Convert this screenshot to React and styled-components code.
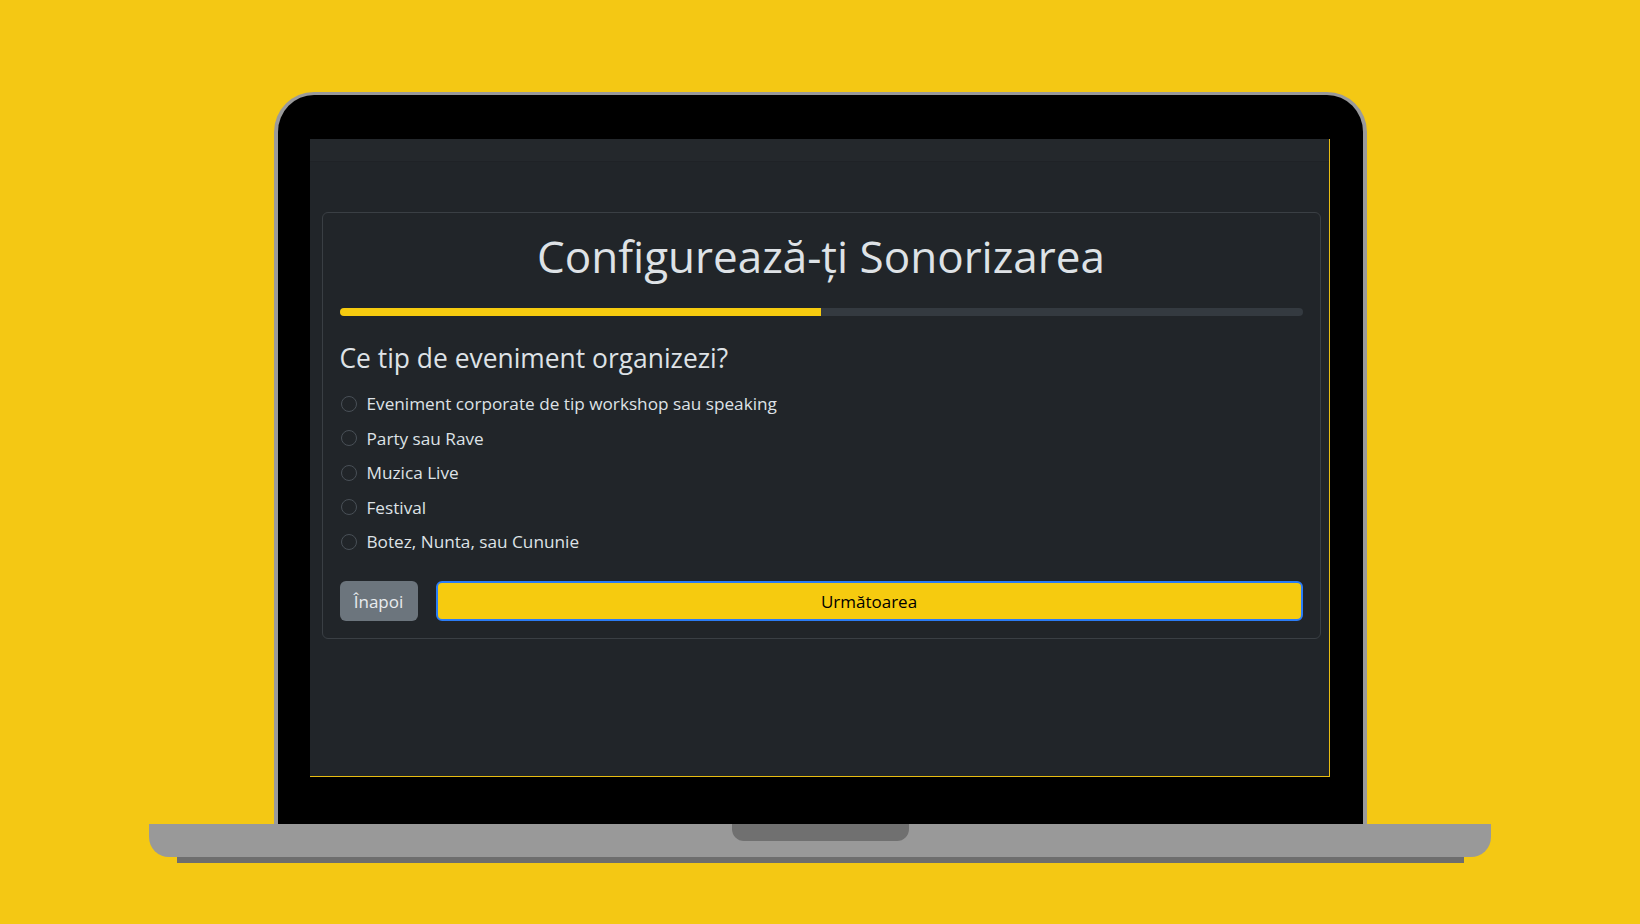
import styled, { createGlobalStyle } from 'styled-components';

const GlobalStyle = createGlobalStyle`
  html, body {
    margin: 0;
    padding: 0;
    background: #f4c814;
  }
  * {
    box-sizing: border-box;
  }
`;

const options = [
  'Eveniment corporate de tip workshop sau speaking',
  'Party sau Rave',
  'Muzica Live',
  'Festival',
  'Botez, Nunta, sau Cununie',
];

const App = () => {
  return (
    <>
      <GlobalStyle />
      <Page>
        <Lid>
          <Screen>
            <TopBar />
            <Card>
              <Title>Configurează-ți Sonorizarea</Title>
              <Progress>
                <ProgressFill style={{ width: '50%' }} />
              </Progress>
              <Question>Ce tip de eveniment organizezi?</Question>
              <OptionList>
                {options.map((label) => (
                  <Option key={label}>
                    <Radio type='radio' name='event' />
                    {label}
                  </Option>
                ))}
              </OptionList>
              <ButtonRow>
                <BackButton>Înapoi</BackButton>
                <NextButton>Următoarea</NextButton>
              </ButtonRow>
            </Card>
          </Screen>
        </Lid>
        <Base>
          <Notch />
        </Base>
        <BaseShadow />
      </Page>
    </>
  );
};

export default App;

const Page = styled.div`
  width: 100%;
  height: 924px;
  background: #f4c814;
  padding-top: 92px;
  display: flex;
  flex-direction: column;
  align-items: center;
  font-family: 'Open Sans', 'Noto Sans', sans-serif;
  overflow: hidden;
`;

const Lid = styled.div`
  width: 1093px;
  height: 732px;
  background: #000;
  border: 4px solid #9a9a9a;
  border-top-width: 3px;
  border-bottom: none;
  border-radius: 40px 40px 0 0;
  padding: 44px 33px 0 32px;
`;

const Screen = styled.div`
  width: 1020px;
  height: 638px;
  background: #212529;
  border-right: 1px solid #e8bd12;
  border-bottom: 1px solid #e8bd12;
  padding: 0 8px 0 12px;
  overflow: hidden;
`;

const TopBar = styled.div`
  height: 23px;
  margin: 0 -8px 50px -12px;
  background: #24282c;
  border-bottom: 1px solid #1f2226;
`;

const Card = styled.div`
  border: 1px solid #3a3f44;
  border-radius: 6px;
  padding: 17px;
  display: flex;
  flex-direction: column;
`;

const Title = styled.h1`
  margin: 0 0 25px;
  font-size: 44px;
  font-weight: 400;
  line-height: 1.2;
  text-align: center;
  color: #dee2e6;
`;

const Progress = styled.div`
  height: 8px;
  border-radius: 4px;
  background: #343a40;
  overflow: hidden;
`;

const ProgressFill = styled.div`
  height: 100%;
  background: #f6cb0f;
`;

const Question = styled.h4`
  margin: 27px 0 16px;
  font-size: 26.4px;
  font-weight: 400;
  line-height: 1.2;
  color: #dee2e6;
`;

const OptionList = styled.div`
  display: flex;
  flex-direction: column;
  gap: 7.5px;
  margin-bottom: 26px;
`;

const Option = styled.label`
  display: flex;
  align-items: center;
  gap: 10px;
  height: 27px;
  padding-left: 1px;
  font-size: 17.2px;
  color: #dee2e6;
`;

const Radio = styled.input`
  appearance: none;
  width: 16px;
  height: 16px;
  margin: 0;
  border: 1px solid #495057;
  border-radius: 50%;
  background: #212529;
  flex-shrink: 0;
`;

const ButtonRow = styled.div`
  display: flex;
  gap: 18px;
`;

const BackButton = styled.button`
  width: 78px;
  height: 40px;
  border: none;
  border-radius: 6px;
  background: #6c757d;
  color: #e9ecef;
  font-family: inherit;
  font-size: 17px;
`;

const NextButton = styled.button`
  flex: 1;
  height: 40px;
  border: 2px solid #2b7cf6;
  border-radius: 6px;
  background: #f6cb0f;
  color: #000;
  font-family: inherit;
  font-size: 17px;
`;

const Base = styled.div`
  width: 1342px;
  height: 33px;
  background: #999999;
  border-radius: 0 0 20px 20px;
  display: flex;
  justify-content: center;
`;

const Notch = styled.div`
  width: 177px;
  height: 17px;
  background: #707070;
  border-radius: 0 0 12px 12px;
`;

const BaseShadow = styled.div`
  width: 1287px;
  height: 6px;
  background: #6e6e6e;
`;
